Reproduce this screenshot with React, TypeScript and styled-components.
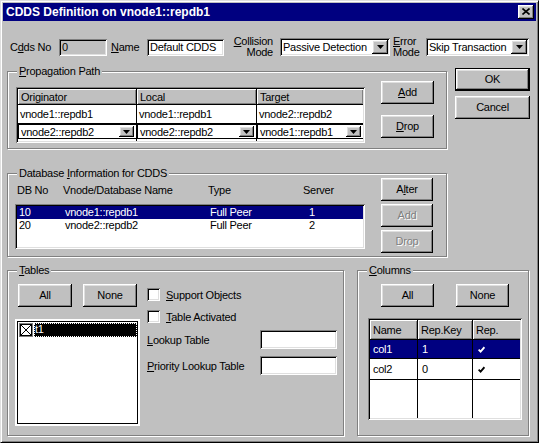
import React from "react";
import styled, { createGlobalStyle, css } from "styled-components";

const GlobalStyle = createGlobalStyle`
  * { box-sizing: border-box; }
  html, body {
    margin: 0;
    padding: 0;
    background: #c0c0c0;
  }
  body {
    font-family: "Liberation Sans", Arial, sans-serif;
    font-size: 11px;
    letter-spacing: -0.25px;
    color: #000;
  }
`;

const raised = css`
  box-shadow: inset -1px -1px 0 #000, inset 1px 1px 0 #fff,
    inset -2px -2px 0 #808080, inset 2px 2px 0 #dfdfdf;
`;

const sunken = css`
  box-shadow: inset 1px 1px 0 #808080, inset -1px -1px 0 #fff,
    inset 2px 2px 0 #000, inset -2px -2px 0 #dfdfdf;
`;

const Dialog = styled.div`
  width: 539px;
  height: 443px;
  background: #c0c0c0;
  border: 1px solid;
  border-color: #dfdfdf #000 #000 #dfdfdf;
  box-shadow: inset 1px 1px 0 #fff, inset -1px -1px 0 #808080;
  padding: 2px;
  display: flex;
  flex-direction: column;
  overflow: hidden;
`;

const TitleBar = styled.div`
  height: 18px;
  flex: none;
  background: #000080;
  color: #fff;
  font-weight: bold;
  font-size: 12px;
  letter-spacing: 0;
  display: flex;
  align-items: center;
  padding-left: 3px;
`;

const CloseButton = styled.div`
  margin-left: auto;
  margin-right: 2px;
  width: 16px;
  height: 14px;
  background: #c0c0c0;
  ${raised};
  display: flex;
  align-items: center;
  justify-content: center;
  padding: 0 1px 1px 0;
`;

const Body = styled.div`
  padding: 15px 0 0 4px;
  display: flex;
  flex-direction: column;
`;

const TopRow = styled.div`
  display: flex;
  align-items: center;
  height: 22px;
  padding-left: 3px;
`;

const Label = styled.span<{ $w?: number; $ml?: number }>`
  width: ${(p) => (p.$w ? `${p.$w}px` : "auto")};
  margin-left: ${(p) => p.$ml ?? 0}px;
  white-space: nowrap;
  flex: none;
`;

const TwoLine = styled.span<{ $w: number; $ml: number; $right?: boolean }>`
  width: ${(p) => p.$w}px;
  margin-left: ${(p) => p.$ml}px;
  display: flex;
  flex-direction: column;
  align-items: ${(p) => (p.$right ? "flex-end" : "flex-start")};
  line-height: 11px;
  flex: none;
`;

const Edit = styled.div<{ $w: number; $h?: number; $grey?: boolean }>`
  width: ${(p) => p.$w}px;
  height: ${(p) => p.$h ?? 17}px;
  background: ${(p) => (p.$grey ? "#c0c0c0" : "#fff")};
  ${sunken};
  padding: 0 3px;
  display: flex;
  align-items: center;
  white-space: nowrap;
  flex: none;
`;

const Select = styled.div<{ $w: number; $ml?: number }>`
  width: ${(p) => p.$w}px;
  margin-left: ${(p) => p.$ml ?? 0}px;
  height: 18px;
  background: #fff;
  ${sunken};
  padding: 2px;
  display: flex;
  flex: none;
`;

const SelectText = styled.span`
  flex: 1;
  overflow: hidden;
  white-space: nowrap;
  padding-left: 1px;
  line-height: 14px;
`;

const ArrowButton = styled.span<{ $w?: number; $h?: number }>`
  width: ${(p) => p.$w ?? 16}px;
  height: ${(p) => p.$h ?? 14}px;
  flex: none;
  background: #c0c0c0;
  ${raised};
  display: flex;
  align-items: center;
  justify-content: center;
`;

const MainRow = styled.div`
  display: flex;
  margin-top: 10px;
`;

const LeftCol = styled.div`
  width: 440px;
  display: flex;
  flex-direction: column;
`;

const RightCol = styled.div`
  margin-left: 8px;
  display: flex;
  flex-direction: column;
  gap: 5px;
`;

const Group = styled.div<{ $w: number; $h: number; $mt?: number }>`
  position: relative;
  width: ${(p) => p.$w}px;
  height: ${(p) => p.$h}px;
  margin-top: ${(p) => p.$mt ?? 0}px;
  border: 1px solid #808080;
  box-shadow: inset 1px 1px 0 #fff, 1px 1px 0 #fff;
  flex: none;
`;

const Caption = styled.span`
  position: absolute;
  top: -7px;
  left: 9px;
  padding: 0 2px;
  line-height: 13px;
  background: #c0c0c0;
  white-space: nowrap;
`;

const PropGroup = styled(Group)`
  display: flex;
  align-items: flex-start;
  padding: 9px 0 0 8px;
`;

const DbGroup = styled(Group)`
  display: flex;
  align-items: flex-start;
  padding: 4px 0 0 7px;
`;

const ButtonCol = styled.div<{ $gap: number }>`
  margin-left: 16px;
  display: flex;
  flex-direction: column;
  gap: ${(p) => p.$gap}px;
`;

const Button = styled.button<{ $w: number; $default?: boolean }>`
  width: ${(p) => p.$w}px;
  height: 23px;
  flex: none;
  padding: 0 0 1px 0;
  font: inherit;
  letter-spacing: inherit;
  color: #000;
  background: #c0c0c0;
  border: ${(p) => (p.$default ? "1px solid #000" : "none")};
  ${raised};
  text-align: center;

  &:disabled {
    color: #808080;
    text-shadow: 1px 1px 0 #fff;
  }
`;

const GridFrame = styled.div<{ $w: number; $h: number; $mt?: number }>`
  width: ${(p) => p.$w}px;
  height: ${(p) => p.$h}px;
  margin-top: ${(p) => p.$mt ?? 0}px;
  padding: 2px;
  background: #fff;
  ${sunken};
  flex: none;
`;

const Grid = styled.div<{ $cols: string; $rows: string }>`
  width: 100%;
  height: 100%;
  display: grid;
  grid-template-columns: ${(p) => p.$cols};
  grid-template-rows: ${(p) => p.$rows};
  gap: 1px;
  background: #000;
  overflow: hidden;
`;

const HeadCell = styled.div`
  background: #c0c0c0;
  box-shadow: inset 1px 1px 0 #fff, inset -1px -1px 0 #808080;
  display: flex;
  align-items: center;
  padding-left: 3px;
  white-space: nowrap;
  overflow: hidden;
`;

const Cell = styled.div<{ $sel?: boolean; $pl?: number }>`
  background: ${(p) => (p.$sel ? "#000080" : "#fff")};
  color: ${(p) => (p.$sel ? "#fff" : "#000")};
  display: flex;
  align-items: center;
  padding-left: ${(p) => p.$pl ?? 2}px;
  white-space: nowrap;
  overflow: hidden;
`;

const ComboCell = styled.div`
  background: #fff;
  box-shadow: inset 1px 1px 0 #000;
  display: flex;
  align-items: center;
  padding: 1px 2px 0 3px;
  white-space: nowrap;
`;

const ComboText = styled.span`
  flex: 1;
  overflow: hidden;
`;

const DbLeft = styled.div`
  width: 350px;
  display: flex;
  flex-direction: column;
`;

const DbHeader = styled.div`
  margin-top: 5px;
  height: 14px;
  line-height: 14px;
  padding-left: 2px;
  display: grid;
  grid-template-columns: 46px 145px 95px 1fr;
`;

const ListBox = styled.div<{ $h: number; $mt: number }>`
  height: ${(p) => p.$h}px;
  margin-top: ${(p) => p.$mt}px;
  background: #fff;
  ${sunken};
  padding: 2px;
`;

const DbRow = styled.div<{ $sel?: boolean }>`
  height: 13px;
  line-height: 13px;
  padding-left: 2px;
  display: grid;
  grid-template-columns: 46px 145px 95px 1fr;
  background: ${(p) => (p.$sel ? "#000080" : "transparent")};
  color: ${(p) => (p.$sel ? "#fff" : "#000")};
`;

const ServerCell = styled.span`
  padding-left: 4px;
`;

const BottomRow = styled.div`
  display: flex;
  gap: 13px;
  margin-top: 13px;
`;

const TablesGroup = styled(Group)`
  display: flex;
  align-items: flex-start;
  padding: 13px 0 0 7px;
`;

const ColumnsGroup = styled(Group)`
  display: flex;
  flex-direction: column;
  padding: 13px 0 0 10px;
`;

const TablesLeft = styled.div`
  width: 125px;
  display: flex;
  flex-direction: column;
`;

const ButtonRow = styled.div<{ $gap: number; $pl: number }>`
  display: flex;
  gap: ${(p) => p.$gap}px;
  padding-left: ${(p) => p.$pl}px;
`;

const CheckList = styled.div`
  margin-top: 12px;
  height: 107px;
  background: #fff;
  padding: 2px;
`;

const CheckListInner = styled.div`
  height: 100%;
  border: 1px solid #000;
  padding: 0 0 0 0;
`;

const CheckItem = styled.div`
  display: flex;
  align-items: center;
  height: 14px;
  margin-top: 1px;
  padding-left: 1px;
`;

const ItemText = styled.span`
  flex: 1;
  height: 14px;
  line-height: 13px;
  margin-left: 1px;
  padding-left: 1px;
  background: #000;
  color: #fff;
  outline: 1px dotted #fff;
  outline-offset: -1px;
`;

const TablesRight = styled.div`
  margin-left: 7px;
  display: flex;
  flex-direction: column;
`;

const CheckRow = styled.div<{ $mt: number }>`
  display: flex;
  align-items: center;
  height: 13px;
  margin-top: ${(p) => p.$mt}px;
`;

const CheckBox = styled.span`
  width: 13px;
  height: 13px;
  flex: none;
  background: #fff;
  ${sunken};
  margin-right: 6px;
`;

const FieldRow = styled.div<{ $mt: number }>`
  display: flex;
  align-items: center;
  height: 19px;
  margin-top: ${(p) => p.$mt}px;
`;

const DownArrow = ({ w = 7 }: { w?: number }) => (
  <svg width={w} height={4} viewBox={`0 0 ${w} 4`}>
    <polygon points={`0,0 ${w},0 ${w / 2},4`} fill="#000" />
  </svg>
);

const CloseGlyph = () => (
  <svg width="8" height="7" viewBox="0 0 8 7">
    <path d="M0.5 0.5 L7.5 6.5 M7.5 0.5 L0.5 6.5" stroke="#000" strokeWidth="1.6" />
  </svg>
);

const Tick = ({ color }: { color: string }) => (
  <svg width="7" height="7" viewBox="0 0 7 7">
    <path d="M0.6 3.6 L2.6 5.6 L6.4 1.2" fill="none" stroke={color} strokeWidth="1.8" />
  </svg>
);

const XBox = () => (
  <svg width="14" height="14" viewBox="0 0 14 14">
    <rect x="0.5" y="0.5" width="13" height="13" fill="#fff" stroke="#808080" />
    <rect x="1.5" y="1.5" width="11" height="11" fill="#fff" stroke="#000" />
    <path d="M2 2 L12 12 M12 2 L2 12" stroke="#000" strokeWidth="1" />
  </svg>
);

const propRows = [
  ["vnode1::repdb1", "vnode1::repdb1", "vnode2::repdb2"],
  ["vnode2::repdb2", "vnode2::repdb2", "vnode1::repdb1"],
];

const dbRows = [
  { no: "10", name: "vnode1::repdb1", type: "Full Peer", server: "1" },
  { no: "20", name: "vnode2::repdb2", type: "Full Peer", server: "2" },
];

const colRows = [
  { name: "col1", key: "1" },
  { name: "col2", key: "0" },
];

export default function App() {
  return (
    <>
      <GlobalStyle />
      <Dialog>
        <TitleBar>
          CDDS Definition on vnode1::repdb1
          <CloseButton>
            <CloseGlyph />
          </CloseButton>
        </TitleBar>
        <Body>
          <TopRow>
            <Label $w={49}>
              C<u>d</u>ds No
            </Label>
            <Edit $w={48} $grey>
              0
            </Edit>
            <Label $w={36} $ml={4}>
              <u>N</u>ame
            </Label>
            <Edit $w={77}>Default CDDS</Edit>
            <TwoLine $w={38} $ml={11} $right>
              <span>
                <u>C</u>ollision
              </span>
              <span>Mode</span>
            </TwoLine>
            <Select $w={110} $ml={7}>
              <SelectText>Passive Detection</SelectText>
              <ArrowButton>
                <DownArrow />
              </ArrowButton>
            </Select>
            <TwoLine $w={33} $ml={3}>
              <span>
                <u>E</u>rror
              </span>
              <span>Mode</span>
            </TwoLine>
            <Select $w={103}>
              <SelectText>Skip Transaction</SelectText>
              <ArrowButton>
                <DownArrow />
              </ArrowButton>
            </Select>
          </TopRow>

          <MainRow>
            <LeftCol>
              <PropGroup $w={440} $h={78} $mt={3}>
                <Caption>
                  <u>P</u>ropagation Path
                </Caption>
                <GridFrame $w={349} $h={56} style={{ marginTop: 6 }}>
                  <Grid $cols="118px 119px 106px" $rows="15px 18px 14px 2px">
                    <HeadCell>Originator</HeadCell>
                    <HeadCell>Local</HeadCell>
                    <HeadCell>Target</HeadCell>
                    {propRows[0].map((v, i) => (
                      <Cell key={`a${i}`}>{v}</Cell>
                    ))}
                    {propRows[1].map((v, i) => (
                      <ComboCell key={`b${i}`}>
                        <ComboText>{v}</ComboText>
                        <ArrowButton $w={15} $h={11}>
                          <DownArrow />
                        </ArrowButton>
                      </ComboCell>
                    ))}
                    <Cell />
                    <Cell />
                    <Cell />
                  </Grid>
                </GridFrame>
                <ButtonCol $gap={11}>
                  <Button $w={53}>
                    <u>A</u>dd
                  </Button>
                  <Button $w={53}>
                    <u>D</u>rop
                  </Button>
                </ButtonCol>
              </PropGroup>

              <DbGroup $w={440} $h={84} $mt={24}>
                <Caption>
                  Database <u>I</u>nformation for CDDS
                </Caption>
                <DbLeft>
                  <DbHeader>
                    <span>DB No</span>
                    <span>Vnode/Database Name</span>
                    <span>Type</span>
                    <span>Server</span>
                  </DbHeader>
                  <ListBox $h={45} $mt={7}>
                    {dbRows.map((r, i) => (
                      <DbRow key={r.no} $sel={i === 0}>
                        <span>{r.no}</span>
                        <span>{r.name}</span>
                        <span>{r.type}</span>
                        <ServerCell>{r.server}</ServerCell>
                      </DbRow>
                    ))}
                  </ListBox>
                </DbLeft>
                <ButtonCol $gap={3}>
                  <Button $w={52}>
                    A<u>l</u>ter
                  </Button>
                  <Button $w={52} disabled>
                    Add
                  </Button>
                  <Button $w={52} disabled>
                    Drop
                  </Button>
                </ButtonCol>
              </DbGroup>
            </LeftCol>

            <RightCol>
              <Button $w={75} $default>
                OK
              </Button>
              <Button $w={75}>Cancel</Button>
            </RightCol>
          </MainRow>

          <BottomRow>
            <TablesGroup $w={337} $h={166}>
              <Caption>
                <u>T</u>ables
              </Caption>
              <TablesLeft>
                <ButtonRow $gap={11} $pl={3}>
                  <Button $w={54}>All</Button>
                  <Button $w={54}>None</Button>
                </ButtonRow>
                <CheckList>
                  <CheckListInner>
                    <CheckItem>
                      <XBox />
                      <ItemText>t1</ItemText>
                    </CheckItem>
                  </CheckListInner>
                </CheckList>
              </TablesLeft>
              <TablesRight>
                <CheckRow $mt={4}>
                  <CheckBox />
                  <span>
                    <u>S</u>upport Objects
                  </span>
                </CheckRow>
                <CheckRow $mt={9}>
                  <CheckBox />
                  <span>
                    <u>T</u>able Activated
                  </span>
                </CheckRow>
                <FieldRow $mt={7}>
                  <Label $w={113}>
                    <u>L</u>ookup Table
                  </Label>
                  <Edit $w={77} $h={19} />
                </FieldRow>
                <FieldRow $mt={7}>
                  <Label $w={113}>
                    <u>P</u>riority Lookup Table
                  </Label>
                  <Edit $w={77} $h={19} />
                </FieldRow>
              </TablesRight>
            </TablesGroup>

            <ColumnsGroup $w={172} $h={166}>
              <Caption>
                <u>C</u>olumns
              </Caption>
              <ButtonRow $gap={22} $pl={13}>
                <Button $w={53}>All</Button>
                <Button $w={53}>None</Button>
              </ButtonRow>
              <GridFrame $w={154} $h={102} $mt={11}>
                <Grid $cols="47px 54px 52px" $rows="19px 18px 20px 1fr">
                  <HeadCell>Name</HeadCell>
                  <HeadCell>Rep.Key</HeadCell>
                  <HeadCell>Rep.</HeadCell>
                  {colRows.map((r, i) => (
                    <React.Fragment key={r.name}>
                      <Cell $sel={i === 0} $pl={3}>
                        {r.name}
                      </Cell>
                      <Cell $sel={i === 0} $pl={4}>
                        {r.key}
                      </Cell>
                      <Cell $sel={i === 0} $pl={5}>
                        <Tick color={i === 0 ? "#fff" : "#000"} />
                      </Cell>
                    </React.Fragment>
                  ))}
                  <Cell />
                  <Cell />
                  <Cell />
                </Grid>
              </GridFrame>
            </ColumnsGroup>
          </BottomRow>
        </Body>
      </Dialog>
    </>
  );
}
